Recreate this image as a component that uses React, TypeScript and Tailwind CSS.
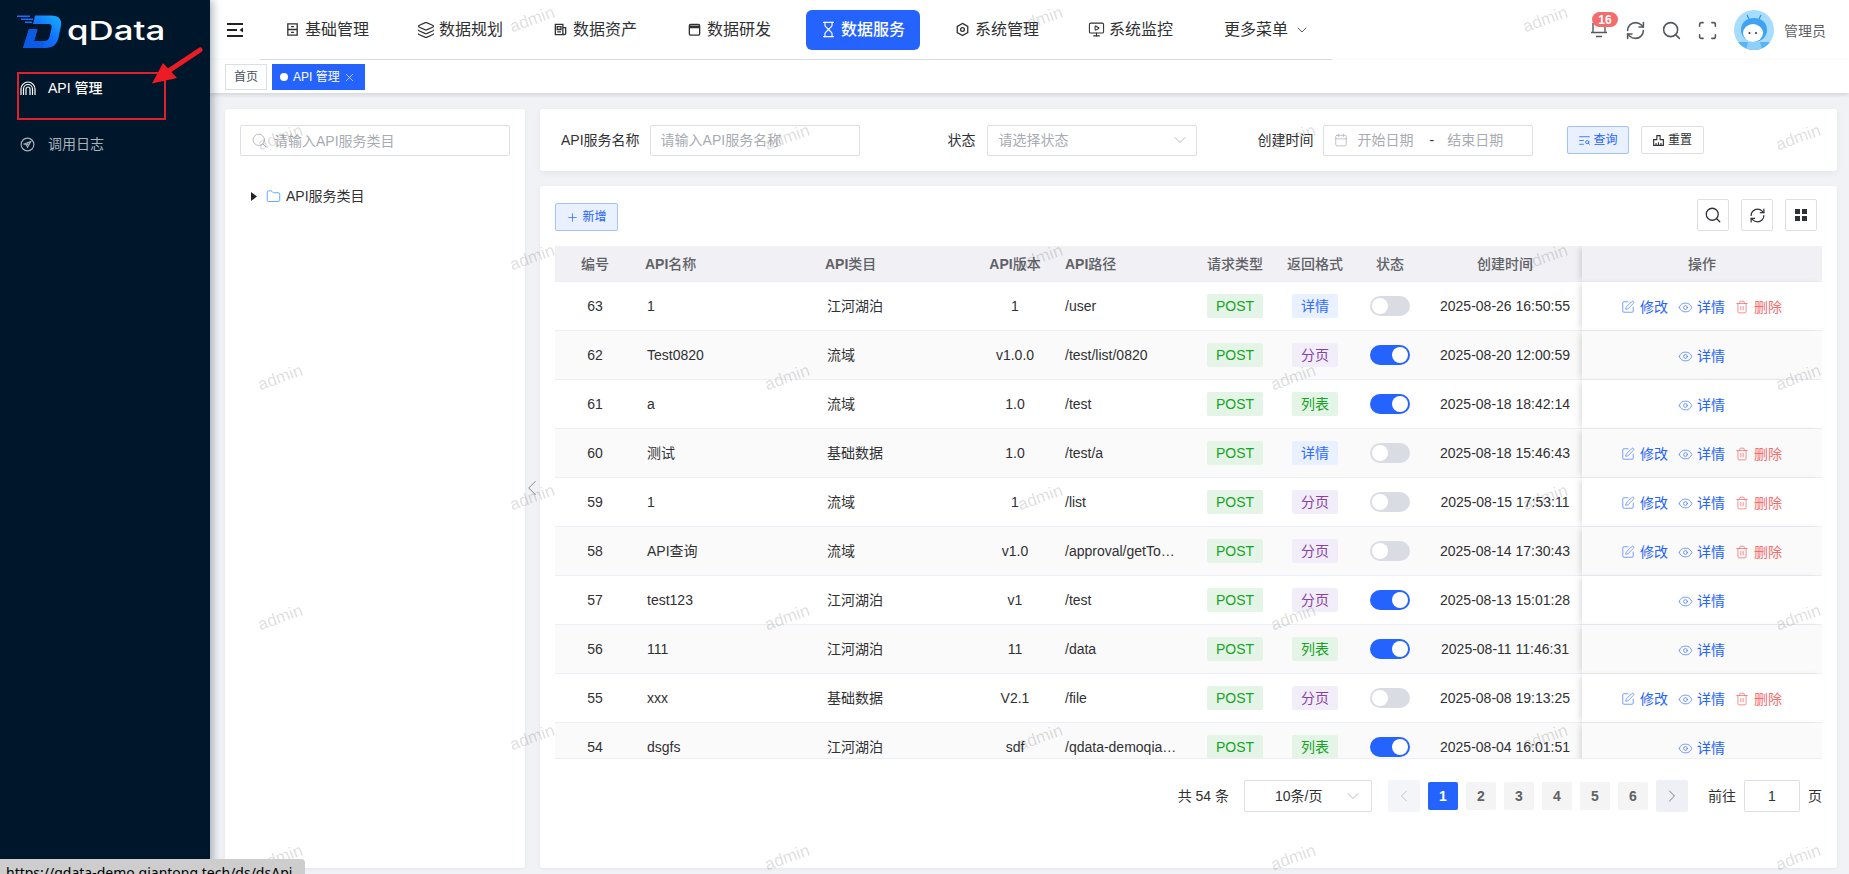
import {
  Calendar,
  ChevronDown,
  ChevronLeft,
  ChevronRight,
  Eye,
  Folder,
  Hourglass,
  Layers,
  MonitorPlay,
  Plus,
  RefreshCw,
  Scan,
  Search,
  SquarePen,
  TextSearch,
  Trash2,
  X,
} from "lucide-react";

type Format = "详情" | "分页" | "列表";

type ApiRow = {
  id: number;
  name: string;
  category: string;
  version: string;
  path: string;
  format: Format;
  enabled: boolean;
  createdAt: string;
};

const ROWS: ApiRow[] = [
  { id: 63, name: "1", category: "江河湖泊", version: "1", path: "/user", format: "详情", enabled: false, createdAt: "2025-08-26 16:50:55" },
  { id: 62, name: "Test0820", category: "流域", version: "v1.0.0", path: "/test/list/0820", format: "分页", enabled: true, createdAt: "2025-08-20 12:00:59" },
  { id: 61, name: "a", category: "流域", version: "1.0", path: "/test", format: "列表", enabled: true, createdAt: "2025-08-18 18:42:14" },
  { id: 60, name: "测试", category: "基础数据", version: "1.0", path: "/test/a", format: "详情", enabled: false, createdAt: "2025-08-18 15:46:43" },
  { id: 59, name: "1", category: "流域", version: "1", path: "/list", format: "分页", enabled: false, createdAt: "2025-08-15 17:53:11" },
  { id: 58, name: "API查询", category: "流域", version: "v1.0", path: "/approval/getTokenInfo", format: "分页", enabled: false, createdAt: "2025-08-14 17:30:43" },
  { id: 57, name: "test123", category: "江河湖泊", version: "v1", path: "/test", format: "分页", enabled: true, createdAt: "2025-08-13 15:01:28" },
  { id: 56, name: "111", category: "江河湖泊", version: "11", path: "/data", format: "列表", enabled: true, createdAt: "2025-08-11 11:46:31" },
  { id: 55, name: "xxx", category: "基础数据", version: "V2.1", path: "/file", format: "分页", enabled: false, createdAt: "2025-08-08 19:13:25" },
  { id: 54, name: "dsgfs", category: "江河湖泊", version: "sdf", path: "/qdata-demoqiantong/api", format: "列表", enabled: true, createdAt: "2025-08-04 16:01:51" },
];

const FORMAT_STYLES: Record<Format, string> = {
  详情: "bg-[#e9f0ff] text-[#2f6bff]",
  分页: "bg-[#f1eefa] text-[#8a3fa8]",
  列表: "bg-[#e4f5e7] text-[#17a325]",
};

const WATERMARKS = [
  ...[20, 258, 498, 738].flatMap((y) => [532, 1040, 1545].map((x) => ({ x, y }))),
  ...[138, 378, 618, 858].flatMap((y) => [280, 787, 1293, 1798].map((x) => ({ x, y }))),
];

function Line({ d, size = 15 }: { d: string; size?: number }) {
  return (
    <svg width={size} height={size} viewBox="0 0 16 16" fill="none" stroke="currentColor" strokeWidth="1.4" className="shrink-0">
      <path d={d} />
    </svg>
  );
}

function LogoMark() {
  return (
    <svg width="46" height="36" viewBox="16 14 46 36">
      <defs>
        <linearGradient id="logo-d" x1="0" y1="1" x2="1" y2="0">
          <stop offset="0" stopColor="#0a4fd8" />
          <stop offset="0.55" stopColor="#1272ff" />
          <stop offset="1" stopColor="#14b4ff" />
        </linearGradient>
      </defs>
      <path d="M17 15.5h13v1.5H17zM21 18.5h12V20H21zM25 21.5h7V23h-7z" fill="#1a6dff" />
      <path
        fillRule="evenodd"
        fill="url(#logo-d)"
        d="M35 15.5h16c8 0 11 4 10 10l-2.500 12c-1.500 7-6 10.500-13 10.500H23l6-19h8.500l-3.500 12h10c3 0 5-1.500 5.500-4l2-9c.5-2.500-.5-4-3-4H33z"
      />
      <path d="M29 29h8.500L34 41.500h10l-1.500 6.500H23z" fill="#0b5be6" />
    </svg>
  );
}

function Avatar() {
  return (
    <svg width="40" height="40" viewBox="0 0 40 40" className="shrink-0 rounded-full">
      <rect width="40" height="40" fill="#a6dcff" />
      <path d="M4 32h32v8H4z" fill="#58b4f5" />
      <path d="M15 9l-2-4M25 9l2-4" stroke="#2d8fe8" strokeWidth="1.2" />
      <path d="M7 20c0-8 6-12 13-12s13 4 13 12c0 7-6 12-13 12S7 27 7 20z" fill="#3fa2f2" />
      <ellipse cx="19" cy="23" rx="10" ry="9" fill="#fff" />
      <circle cx="15.500" cy="23" r="1" fill="#333" />
      <circle cx="22" cy="23" r="1" fill="#333" />
      <path d="M14 32h12l2 8H12z" fill="#8fd0fb" />
    </svg>
  );
}

function TopNav() {
  const items = [
    { label: "基础管理", icon: <Line d="M3 2h10v12H3zM3 8h10M6.500 5h3M6.500 11h3" /> },
    { label: "数据规划", icon: <Layers size={18} strokeWidth={1.500} className="shrink-0" /> },
    { label: "数据资产", icon: <Line d="M2.500 2.500h8v11h-8zM10.500 6h3v6a1.500 1.500 0 0 1-3 0M4.500 5h4v3h-4zM4.500 10.500h4" /> },
    { label: "数据研发", icon: <Line d="M2.500 4a1.500 1.500 0 0 1 1.500-1.500h8A1.500 1.500 0 0 1 13.500 4v8.500a1.500 1.500 0 0 1-1.500 1.500H4a1.500 1.500 0 0 1-1.500-1.500zM2.500 4.500h11M2.500 6h11" /> },
    { label: "数据服务", icon: <Hourglass size={17} strokeWidth={1.600} className="shrink-0" />, active: true },
    { label: "系统管理", icon: <Line d="M8 1.500l5.600 3.200v6.600L8 14.500l-5.600-3.200V4.700zM8 6a2 2 0 1 0 0 4 2 2 0 0 0 0-4z" /> },
    { label: "系统监控", icon: <MonitorPlay size={17} strokeWidth={1.500} className="shrink-0" /> },
  ];

  return (
    <nav className="ml-[17px] flex h-[60px] w-[1072px] items-center gap-5 border-b border-[#dcdfe6] pl-[10px]">
      {items.map((item) => (
        <div
          key={item.label}
          className={`flex h-10 w-[114px] items-center justify-center gap-[5px] rounded-[6px] text-base ${
            item.active ? "bg-[#2563ff] font-medium text-white" : "text-[#303133]"
          }`}
        >
          <span className="flex w-[15px] justify-center">{item.icon}</span>
          <span>{item.label}</span>
        </div>
      ))}
      <div className="ml-[16px] flex items-center gap-[6px] text-base text-[#303133]">
        <span>更多菜单</span>
        <ChevronDown size={16} strokeWidth={1.200} />
      </div>
    </nav>
  );
}

function HeaderIcon({ children }: { children: React.ReactNode }) {
  return <span className="flex h-[18px] w-[18px] items-center justify-center">{children}</span>;
}

function Header() {
  return (
    <header className="flex h-[60px] items-center bg-white pl-[17px] pr-[23px] text-[#55595e]">
      <svg width="16" height="14" viewBox="0 0 16 14" className="text-[#222]">
        <path d="M0 1h16M0 7h10M0 13h16" stroke="currentColor" strokeWidth="1.800" />
        <path d="M16 4.500v5L12.500 7z" fill="currentColor" />
      </svg>
      <TopNav />
      <div className="ml-auto flex items-center gap-[18px]">
        <div className="relative flex h-[18px] w-[18px] items-center justify-center">
          <svg width="18" height="16" viewBox="0 0 18 16">
            <path d="M3 1v9M15 1v9M1 10.500h16M6 14.500h6" stroke="currentColor" strokeWidth="1.400" fill="none" />
          </svg>
          <span className="absolute left-[2px] top-[-9px] flex h-[15px] w-[26px] items-center justify-center rounded-full bg-[#f56c6c] text-xs font-bold leading-none text-white">
            16
          </span>
        </div>
        <HeaderIcon>
          <RefreshCw size={21} strokeWidth={1.800} className="shrink-0" />
        </HeaderIcon>
        <HeaderIcon>
          <Search size={21} strokeWidth={1.800} className="shrink-0" />
        </HeaderIcon>
        <HeaderIcon>
          <Scan size={21} strokeWidth={1.800} className="shrink-0" />
        </HeaderIcon>
        <Avatar />
      </div>
      <span className="ml-[10px] pt-[2px] text-sm text-[#606266]">管理员</span>
    </header>
  );
}

function TabsBar() {
  return (
    <div className="relative flex h-[33px] items-start gap-[5px] bg-white pl-[15px] pt-1 shadow-[0_2px_4px_rgba(0,0,0,0.12)]">
      <span className="flex h-[26px] w-[42px] items-center justify-center border border-[#dcdfe6] text-xs text-[#495060]">
        首页
      </span>
      <span className="flex h-[26px] w-[93px] items-center gap-[5px] bg-[#2563ff] pl-2 text-xs text-white">
        <span className="h-2 w-2 rounded-full bg-white" />
        API 管理
        <X size={13} strokeWidth={1.200} className="-ml-[2px] mt-px" />
      </span>
    </div>
  );
}

function CategoryPanel() {
  return (
    <section className="w-[300px] shrink-0 rounded-[3px] bg-white px-[15px] pt-4 shadow-[0_1px_4px_rgba(0,0,0,0.05)]">
      <div className="flex h-[31px] items-center gap-[6px] rounded-[2px] border border-[#dcdfe6] pl-[10px] text-sm text-[#a8abb2]">
        <Search size={17} strokeWidth={1.200} />
        <span>请输入API服务类目</span>
      </div>
      <div className="mt-[30px] flex items-center pl-[11px] text-sm text-[#303133]">
        <svg width="6" height="9" viewBox="0 0 6 9">
          <path d="M0 0l6 4.500L0 9z" fill="#222" />
        </svg>
        <Folder size={15} strokeWidth={1.400} className="ml-[9px] text-[#4a9eff]" />
        <span className="ml-[5px]">API服务类目</span>
      </div>
    </section>
  );
}

function Field({ className, children }: { className: string; children: React.ReactNode }) {
  return (
    <div className={`flex h-[31px] w-[210px] items-center rounded-[2px] border border-[#dcdfe6] text-sm text-[#a8abb2] ${className}`}>
      {children}
    </div>
  );
}

function FilterBar() {
  return (
    <section className="flex h-[62px] shrink-0 items-center rounded-[3px] bg-white pl-[21px] text-sm text-[#303133] shadow-[0_2px_6px_rgba(0,0,0,0.06)]">
      <span>API服务名称</span>
      <Field className="ml-[10px] pl-[10px]">请输入API服务名称</Field>
      <span className="ml-[88px]">状态</span>
      <Field className="ml-[11px] justify-between pl-[11px] pr-[6px]">
        请选择状态
        <ChevronDown size={20} strokeWidth={1} />
      </Field>
      <span className="ml-[61px]">创建时间</span>
      <Field className="ml-[9px] pl-[10px]">
        <Calendar size={14} strokeWidth={1.200} />
        <span className="ml-[10px]">开始日期</span>
        <span className="ml-4 text-[#303133]">-</span>
        <span className="ml-[13px]">结束日期</span>
      </Field>
      <button className="ml-[34px] flex h-7 w-[62px] items-center justify-center gap-[3px] rounded-[2px] border border-[#a3c0ff] bg-[#e9f0ff] text-xs text-[#2563ff]">
        <TextSearch size={13} strokeWidth={1.500} />
        查询
      </button>
      <button className="ml-3 flex h-7 w-[63px] items-center justify-center gap-[3px] rounded-[2px] border border-[#dcdfe6] text-xs text-[#303133]">
        <Line size={13} d="M6 2h4v5h4v7H2V7h4zM5 14v-3M8 14v-4M11 14v-3" />
        重置
      </button>
    </section>
  );
}

function StatusSwitch({ on }: { on: boolean }) {
  return (
    <div
      className={`mx-auto flex h-5 w-10 items-center rounded-full px-[2px] ${
        on ? "justify-end bg-[#2563ff]" : "justify-start bg-[#d9dce3]"
      }`}
    >
      <span className="h-4 w-4 rounded-full bg-white" />
    </div>
  );
}

function Tag({ className, children }: { className: string; children: React.ReactNode }) {
  return (
    <span className={`mx-auto flex h-6 items-center justify-center rounded-[2px] ${className}`}>{children}</span>
  );
}

function ActionIcon({ children }: { children: React.ReactNode }) {
  return <span className="flex w-3 justify-center">{children}</span>;
}

function RowActions({ editable }: { editable: boolean }) {
  return (
    <div className="flex items-center justify-center gap-[11px] pt-[2px] text-[#2563ff]">
      {editable && (
        <span className="flex items-center gap-[6px]">
          <ActionIcon>
            <SquarePen size={14} strokeWidth={1.300} className="shrink-0 text-[#4f83ff]" />
          </ActionIcon>
          修改
        </span>
      )}
      <span className="flex items-center gap-[6px]">
        <ActionIcon>
          <Eye size={15} strokeWidth={1.300} className="shrink-0 text-[#4f83ff]" />
        </ActionIcon>
        详情
      </span>
      {editable && (
        <span className="flex items-center gap-[6px] text-[#f56c6c]">
          <ActionIcon>
            <Trash2 size={14} strokeWidth={1.300} className="shrink-0" />
          </ActionIcon>
          删除
        </span>
      )}
    </div>
  );
}

function ApiTable() {
  const headCell = "border-b border-[#ebeef5] font-medium text-[#606266]";
  const cell = "border-b border-[#ebeef5]";

  return (
    <div className="h-[513px] overflow-hidden border-b border-[#ebeef5]">
      <table className="w-[1267px] table-fixed border-separate border-spacing-0 text-sm text-[#303133]">
        <colgroup>
          <col className="w-[80px]" />
          <col className="w-[180px]" />
          <col className="w-[162px]" />
          <col className="w-[76px]" />
          <col className="w-[142px]" />
          <col className="w-[80px]" />
          <col className="w-[80px]" />
          <col className="w-[70px]" />
          <col className="w-[157px]" />
          <col className="w-[240px]" />
        </colgroup>
        <thead>
          <tr className="h-9 bg-[#f0f0f5]">
            <th className={`${headCell} text-center`}>编号</th>
            <th className={`${headCell} pl-[10px] text-left`}>
              <b>API</b>名称
            </th>
            <th className={`${headCell} pl-[10px] text-left`}>
              <b>API</b>类目
            </th>
            <th className={`${headCell} text-center`}>
              <b>API</b>版本
            </th>
            <th className={`${headCell} pl-3 text-left`}>
              <b>API</b>路径
            </th>
            <th className={`${headCell} text-center`}>请求类型</th>
            <th className={`${headCell} text-center`}>返回格式</th>
            <th className={`${headCell} text-center`}>状态</th>
            <th className={`${headCell} pl-[3px] text-center`}>创建时间</th>
            <th className={`${headCell} bg-[#f0f0f5] text-center shadow-[-4px_0_6px_-2px_rgba(0,0,0,0.14)]`}>操作</th>
          </tr>
        </thead>
        <tbody>
          {ROWS.map((row, i) => (
            <tr key={row.id} className={`h-[49px] ${i % 2 === 1 ? "bg-[#fafafa]" : "bg-white"}`}>
              <td className={`${cell} text-center`}>{row.id}</td>
              <td className={`${cell} truncate pl-3`}>{row.name}</td>
              <td className={`${cell} pl-3`}>{row.category}</td>
              <td className={`${cell} text-center`}>{row.version}</td>
              <td className={`${cell} truncate pl-3 pr-[15px]`}>{row.path}</td>
              <td className={cell}>
                <Tag className="w-14 bg-[#e4f5e7] text-[#17a325]">POST</Tag>
              </td>
              <td className={cell}>
                <Tag className={`w-[46px] ${FORMAT_STYLES[row.format]}`}>{row.format}</Tag>
              </td>
              <td className={cell}>
                <StatusSwitch on={row.enabled} />
              </td>
              <td className={`${cell} pl-[3px] text-center`}>{row.createdAt}</td>
              <td
                className={`${cell} shadow-[-4px_0_6px_-2px_rgba(0,0,0,0.14)] ${
                  i % 2 === 1 ? "bg-[#fafafa]" : "bg-white"
                }`}
              >
                <RowActions editable={!row.enabled} />
              </td>
            </tr>
          ))}
        </tbody>
      </table>
    </div>
  );
}

function Pagination() {
  return (
    <div className="mt-[21px] flex items-center justify-end text-sm text-[#303133]">
      <span>共 54 条</span>
      <div className="ml-[15px] flex h-8 w-[128px] items-center justify-between rounded-[2px] border border-[#dcdfe6] pl-[30px] pr-[8px]">
        10条/页
        <ChevronDown size={20} strokeWidth={1} className="text-[#a8abb2]" />
      </div>
      <div className="ml-4 flex h-8 w-8 items-center justify-center rounded-[2px] bg-[#f4f5f9] text-[#b4b7bf]">
        <ChevronLeft size={20} strokeWidth={1} />
      </div>
      <div className="ml-2 flex items-center gap-2">
        {[1, 2, 3, 4, 5, 6].map((page) => (
          <span
            key={page}
            className={`flex h-7 w-[30px] items-center justify-center rounded-[2px] font-bold ${
              page === 1 ? "bg-[#2563ff] text-white" : "bg-[#f4f4f5] text-[#606266]"
            }`}
          >
            {page}
          </span>
        ))}
      </div>
      <div className="ml-2 flex h-8 w-8 items-center justify-center rounded-[2px] bg-[#eff0f5] text-[#606266]">
        <ChevronRight size={20} strokeWidth={1} />
      </div>
      <span className="ml-5">前往</span>
      <div className="ml-2 flex h-8 w-14 items-center justify-center rounded-[2px] border border-[#dcdfe6]">1</div>
      <span className="ml-2">页</span>
    </div>
  );
}

function TablePanel() {
  const iconButton = "flex h-8 w-8 items-center justify-center rounded-[2px] border border-[#dcdfe6] text-[#303133]";

  return (
    <section className="min-h-0 flex-1 rounded-[3px] bg-white px-[15px] pt-[13px] shadow-[0_1px_4px_rgba(0,0,0,0.05)]">
      <div className="flex h-8 items-end justify-between pr-[5px]">
        <button className="flex h-7 w-[63px] items-center justify-center gap-[3px] rounded-[2px] border border-[#a3c0ff] bg-[#e9f0ff] text-xs text-[#2563ff]">
          <Plus size={13} strokeWidth={1.300} />
          新增
        </button>
        <div className="flex gap-3">
          <span className={iconButton}>
            <Search size={18} strokeWidth={1.700} />
          </span>
          <span className={iconButton}>
            <RefreshCw size={17} strokeWidth={1.700} />
          </span>
          <span className={iconButton}>
            <svg width="12" height="12" viewBox="0 0 12 12" fill="currentColor">
              <path d="M0 0h5v5H0zM7 0h5v5H7zM0 7h5v5H0zM7 7h5v5H7z" />
            </svg>
          </span>
        </div>
      </div>
      <div className="mt-[15px]">
        <ApiTable />
      </div>
      <Pagination />
    </section>
  );
}

export default function App() {
  return (
    <div className="relative flex h-[874px] w-[1849px] overflow-hidden bg-[#f0f2f6] font-['Liberation_Sans','Noto_Sans_CJK_SC',sans-serif]">
      <aside className="relative z-10 w-[210px] shrink-0 bg-[#00162b] shadow-[3px_0_8px_rgba(0,21,41,0.3)]">
        <div className="flex h-[60px] items-start pl-4 pt-[14px]">
          <LogoMark />
          <span className="ml-[5px] mt-[1px] origin-left scale-x-[1.34] font-['Inter',sans-serif] text-[26px] font-medium leading-[32px] text-white">
            qData
          </span>
        </div>
        <div className="flex h-14 items-center pl-5 text-sm font-medium text-white">
          <svg width="16" height="14" viewBox="0 0 16 14" fill="none" stroke="currentColor" strokeWidth="1.200">
            <path d="M1 14V8a7 7 0 0 1 14 0v6M3.500 14V8a4.500 4.500 0 0 1 9 0v6M6 14V8a2 2 0 0 1 4 0v6" />
          </svg>
          <span className="ml-3">API 管理</span>
        </div>
        <div className="flex h-14 items-center pl-5 text-sm text-[#a9b2bb]">
          <svg width="15" height="15" viewBox="0 0 16 16" fill="none" stroke="currentColor" strokeWidth="1.200">
            <circle cx="8" cy="8" r="6.800" />
            <path d="M11.500 4.800L4.500 7.500l2.500 1 1 2.500zM7 8.500l2-1.500" />
          </svg>
          <span className="ml-[13px]">调用日志</span>
        </div>
      </aside>

      <main className="flex min-w-0 flex-1 flex-col">
        <Header />
        <TabsBar />
        <div className="flex min-h-0 flex-1 gap-[15px] pb-[6px] pl-[15px] pr-3 pt-4">
          <CategoryPanel />
          <div className="flex min-w-0 flex-1 flex-col gap-[15px]">
            <FilterBar />
            <TablePanel />
          </div>
        </div>
      </main>

      {/* collapse handle between the two panels */}
      <ChevronLeft size={26} strokeWidth={0.700} className="absolute left-[519px] top-[475px] text-[#606266]" />

      {/* annotation drawn on top of the screenshot */}
      <div className="absolute left-[17px] top-[72px] z-20 h-12 w-[149px] border-2 border-[#e0202a]" />
      <svg width="60" height="50" viewBox="148 44 60 50" className="absolute left-[148px] top-[44px] z-20">
        <path d="M200 50L170 70" stroke="#ed1c24" strokeWidth="5" strokeLinecap="round" />
        <path d="M152 83.500L163 63l14 15z" fill="#ed1c24" />
      </svg>

      {WATERMARKS.map((w) => (
        <span
          key={`${w.x}-${w.y}`}
          className="pointer-events-none absolute z-30 -rotate-[20deg] text-[17px] leading-none text-black/15"
          style={{ left: w.x - 23, top: w.y - 9 }}
        >
          admin
        </span>
      ))}

      <div className="absolute bottom-0 left-0 z-40 h-[15px] w-[305px] overflow-hidden rounded-tr-[4px] bg-[#cdcdcd] pl-[6px] pt-[5px] font-['Noto_Sans',sans-serif] text-sm leading-[18px] text-black">
        https://qdata-demo.qiantong.tech/ds/dsApi
      </div>
    </div>
  );
}
